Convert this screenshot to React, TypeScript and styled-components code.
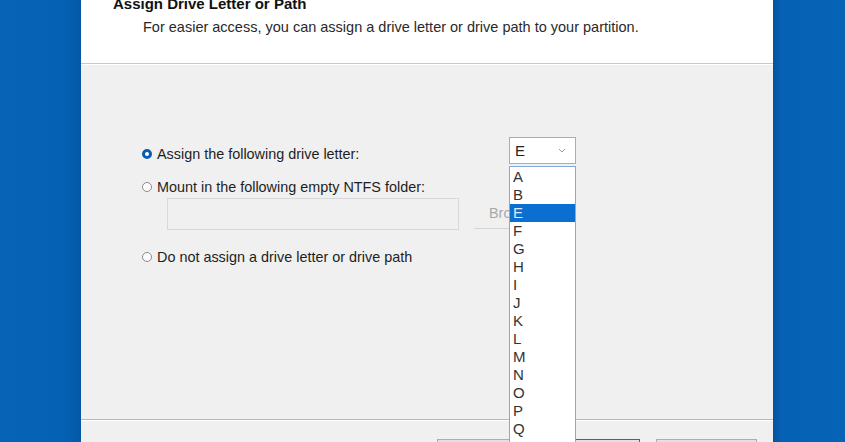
import React from 'react'
import styled, { createGlobalStyle } from 'styled-components'

const letters = ['A', 'B', 'E', 'F', 'G', 'H', 'I', 'J', 'K', 'L', 'M', 'N', 'O', 'P', 'Q', 'R', 'S']

const App = () => {
  return (
    <>
      <GlobalStyle />
      <Screen>
        <Backdrop side="left" />
        <Dialog>
          <Header>
            <Title>Assign Drive Letter or Path</Title>
            <Subtitle>
              For easier access, you can assign a drive letter or drive path to your partition.
            </Subtitle>
          </Header>
          <Body>
            <FirstRow>
              <Option first>
                <Radio checked />
                Assign the following drive letter:
              </Option>
              <ComboWrap>
                <Combo>
                  <span>E</span>
                  <svg width="8" height="5" viewBox="0 0 8 5">
                    <path d="M1 1l3 3 3-3" fill="none" stroke="#9a9a9a" strokeWidth="1" />
                  </svg>
                </Combo>
                <List>
                  {letters.map((l) => (
                    <Item key={l} selected={l === 'E'}>
                      {l}
                    </Item>
                  ))}
                </List>
              </ComboWrap>
            </FirstRow>
            <Option space={14}>
              <Radio />
              Mount in the following empty NTFS folder:
            </Option>
            <FolderRow>
              <PathInput />
              <BrowseButton>Browse...</BrowseButton>
            </FolderRow>
            <Option space={18}>
              <Radio />
              Do not assign a drive letter or drive path
            </Option>
          </Body>
          <Footer>
            <WizardButton>&lt; Back</WizardButton>
            <WizardButton primary>Next &gt;</WizardButton>
            <WizardButton gap>Cancel</WizardButton>
          </Footer>
        </Dialog>
        <Backdrop side="right" />
      </Screen>
    </>
  )
}

const GlobalStyle = createGlobalStyle`
  html, body {
    margin: 0;
    padding: 0;
    overflow: hidden;
  }
  body {
    font-family: "Liberation Sans", Arial, sans-serif;
    color: #1e1e1e;
  }
`

const Screen = styled.div`
  display: flex;
  width: 845px;
  height: 442px;
  overflow: hidden;
  background: #0561b3;
`

const Backdrop = styled.div<{ side: 'left' | 'right' }>`
  flex: ${(p) => (p.side === 'left' ? '0 0 81px' : '1')};
  background: ${(p) =>
    p.side === 'left'
      ? 'linear-gradient(90deg, #0663b6 0%, #0561b3 80%, #0458a6 100%)'
      : 'linear-gradient(90deg, #04549f 0%, #0561b3 12%, #0663b5 100%)'};
`

const Dialog = styled.div`
  flex: 0 0 692px;
  display: flex;
  flex-direction: column;
  background: #f0f0f0;
  overflow: hidden;
`

const Header = styled.div`
  flex: 0 0 64px;
  box-sizing: border-box;
  display: flex;
  flex-direction: column;
  background: #fff;
  border-bottom: 1px solid #c8c8c8;
  padding-left: 32px;
`

const Title = styled.div`
  font-size: 15px;
  font-weight: bold;
  line-height: 16px;
  margin-top: -4px;
  color: #111;
`

const Subtitle = styled.div`
  font-size: 14.5px;
  line-height: 17px;
  margin-top: 7px;
  padding-left: 30px;
  color: #2a2a2a;
`

const Body = styled.div`
  flex: 0 0 355px;
  box-sizing: border-box;
  border-top: 1px solid #fff;
  padding: 72px 0 0 61px;
  display: flex;
  flex-direction: column;
  align-items: flex-start;
`

const FirstRow = styled.div`
  display: grid;
  grid-template-columns: 367px 67px;
  align-items: start;
  height: 27px;
`

const Option = styled.div<{ first?: boolean; space?: number }>`
  display: flex;
  align-items: center;
  height: 18px;
  margin-top: ${(p) => (p.first ? '8px' : `${p.space ?? 0}px`)};
  font-size: 14.4px;
  color: #1e1e1e;
  white-space: nowrap;
`

const Radio = styled.span<{ checked?: boolean }>`
  box-sizing: border-box;
  flex: 0 0 10px;
  height: 10px;
  border-radius: 50%;
  margin-right: 5px;
  background: #fff;
  border: ${(p) => (p.checked ? '3px solid #0a5cb0' : '1px solid #8a8a8a')};
`

const ComboWrap = styled.div`
  position: relative;
`

const Combo = styled.div`
  box-sizing: border-box;
  width: 67px;
  height: 27px;
  background: #fff;
  border: 1px solid #8fb1da;
  display: flex;
  align-items: center;
  justify-content: space-between;
  padding: 0 9px 0 5px;
  font-size: 15px;
  color: #222;
`

const List = styled.div`
  position: absolute;
  top: 29px;
  left: 0;
  width: 67px;
  box-sizing: border-box;
  background: #fff;
  border: 1px solid #86aad6;
  padding-top: 1px;
  z-index: 2;
`

const Item = styled.div<{ selected?: boolean }>`
  height: 18px;
  line-height: 18px;
  padding-left: 3px;
  font-size: 15px;
  color: ${(p) => (p.selected ? '#d6ebff' : '#333')};
  background: ${(p) => (p.selected ? '#0a6fd0' : 'transparent')};
`

const FolderRow = styled.div`
  display: flex;
  align-items: flex-start;
  margin-top: 2px;
  padding-left: 25px;
`

const PathInput = styled.div`
  box-sizing: border-box;
  width: 292px;
  height: 32px;
  background: #f0f0f0;
  border: 1px solid #d9d9d9;
`

const BrowseButton = styled.div`
  box-sizing: border-box;
  width: 90px;
  height: 31px;
  margin-left: 15px;
  border-bottom: 1px solid #d4d4d4;
  display: flex;
  align-items: center;
  justify-content: center;
  font-size: 14.4px;
  color: #a8a8a8;
`

const Footer = styled.div`
  flex: 1;
  min-height: 0;
  border-top: 1px solid #b8b8b8;
  box-shadow: inset 0 1px 0 #fff;
  display: flex;
  align-items: flex-start;
  padding: 19px 0 0 356px;
`

const WizardButton = styled.div<{ primary?: boolean; gap?: boolean }>`
  box-sizing: border-box;
  flex: 0 0 101px;
  height: 24px;
  margin-left: ${(p) => (p.gap ? '16px' : p.primary ? '1px' : '0')};
  background: #e1e1e1;
  border: 1px solid ${(p) => (p.primary ? '#0078d7' : '#adadad')};
  font-size: 13px;
  display: flex;
  align-items: center;
  justify-content: center;
`

export default App
